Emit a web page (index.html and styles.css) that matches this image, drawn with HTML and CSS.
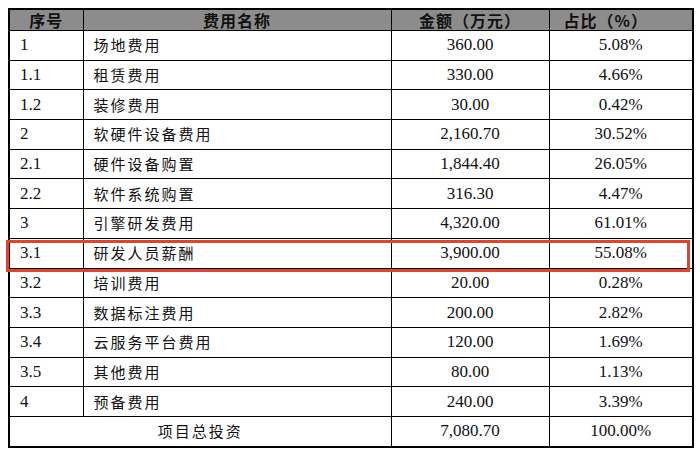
FILE: index.html
```html
<!DOCTYPE html>
<html lang="zh">
<head>
<meta charset="utf-8">
<link rel="stylesheet" href="styles.css">
</head>
<body>
<div class="wrap">
<table class="budget">
  <colgroup>
    <col class="c-no"><col class="c-name"><col class="c-amt"><col class="c-pct">
  </colgroup>
  <thead>
    <tr><th>序号</th><th>费用名称</th><th>金额（万元）</th><th class="th-pct">占比（%）</th></tr>
  </thead>
  <tbody>
    <tr><td class="no">1</td><td class="name">场地费用</td><td class="num">360.00</td><td class="num">5.08%</td></tr>
    <tr><td class="no">1.1</td><td class="name">租赁费用</td><td class="num">330.00</td><td class="num">4.66%</td></tr>
    <tr><td class="no">1.2</td><td class="name">装修费用</td><td class="num">30.00</td><td class="num">0.42%</td></tr>
    <tr><td class="no">2</td><td class="name">软硬件设备费用</td><td class="num">2,160.70</td><td class="num">30.52%</td></tr>
    <tr><td class="no">2.1</td><td class="name">硬件设备购置</td><td class="num">1,844.40</td><td class="num">26.05%</td></tr>
    <tr><td class="no">2.2</td><td class="name">软件系统购置</td><td class="num">316.30</td><td class="num">4.47%</td></tr>
    <tr><td class="no">3</td><td class="name">引擎研发费用</td><td class="num">4,320.00</td><td class="num">61.01%</td></tr>
    <tr><td class="no">3.1</td><td class="name">研发人员薪酬</td><td class="num">3,900.00</td><td class="num">55.08%</td></tr>
    <tr><td class="no">3.2</td><td class="name">培训费用</td><td class="num">20.00</td><td class="num">0.28%</td></tr>
    <tr><td class="no">3.3</td><td class="name">数据标注费用</td><td class="num">200.00</td><td class="num">2.82%</td></tr>
    <tr><td class="no">3.4</td><td class="name">云服务平台费用</td><td class="num">120.00</td><td class="num">1.69%</td></tr>
    <tr><td class="no">3.5</td><td class="name">其他费用</td><td class="num">80.00</td><td class="num">1.13%</td></tr>
    <tr><td class="no">4</td><td class="name">预备费用</td><td class="num">240.00</td><td class="num">3.39%</td></tr>
    <tr><td class="name total" colspan="2">项目总投资</td><td class="num">7,080.70</td><td class="num">100.00%</td></tr>
  </tbody>
</table>
<div class="highlight"></div>
</div>
</body>
</html>
```

FILE: styles.css
```css
html, body {
  margin: 0;
  padding: 0;
  background: #ffffff;
}
body {
  padding: 8px;
  font-family: "Liberation Serif", "Noto Sans CJK SC", serif;
  color: #111;
}
.wrap {
  position: relative;
  width: 684px;
}
.budget {
  width: 684px;
  height: 440px;
  border-collapse: collapse;
  table-layout: fixed;
  border: 2px solid #000;
}
.c-no { width: 74px; }
.c-name { width: 308px; }
.c-amt { width: 158px; }
.c-pct { width: 144px; }

.budget th,
.budget td {
  border: 1.5px solid #000;
  padding: 0;
  line-height: 20px;
  white-space: nowrap;
}
.budget th {
  background: #8c8c8c;
  font-family: "Noto Sans CJK SC", sans-serif;
  font-weight: 700;
  font-size: 16px;
  letter-spacing: 1px;
  color: #111;
  text-align: center;
}
.budget th.th-pct {
  padding-right: 30px;
}
.budget td.no {
  font-family: "Liberation Serif", serif;
  font-size: 17px;
  padding-left: 10px;
}
.budget td.name {
  font-family: "Noto Sans CJK SC", sans-serif;
  font-size: 15px;
  letter-spacing: 2px;
  padding-left: 10px;
}
.budget td.total {
  text-align: center;
  padding-left: 0;
}
.budget td.num {
  font-family: "Liberation Serif", serif;
  font-size: 17px;
  text-align: center;
}
.highlight {
  position: absolute;
  left: -2px;
  top: 232px;
  width: 678px;
  height: 26px;
  border: 3px solid #e4432b;
}
```
